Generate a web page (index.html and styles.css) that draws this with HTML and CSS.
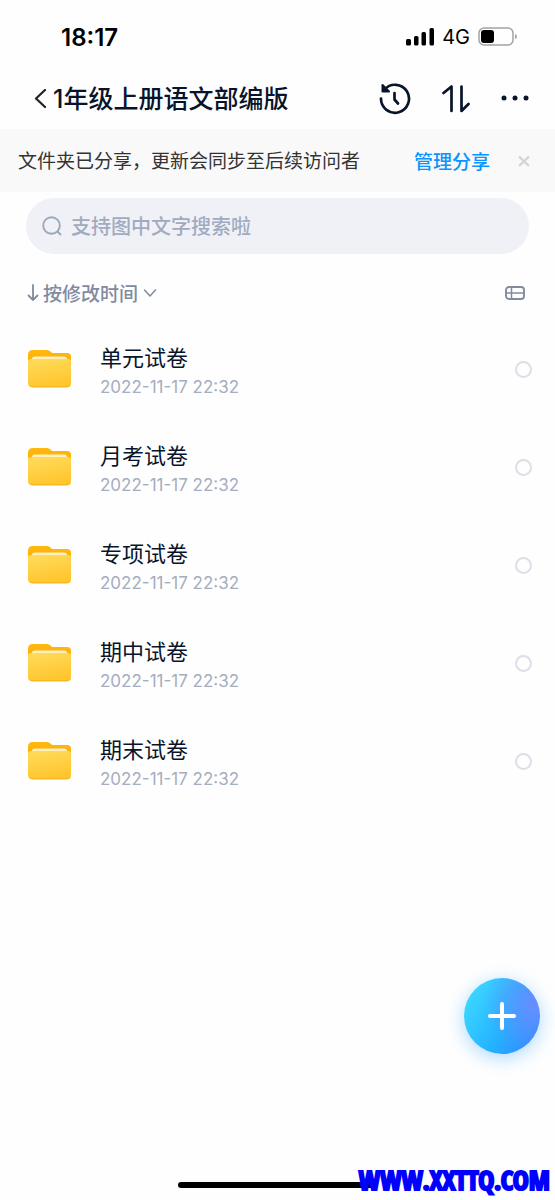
FILE: index.html
```html
<!DOCTYPE html>
<html lang="zh-CN">
<head>
<meta charset="utf-8">
<meta name="viewport" content="width=device-width, initial-scale=1">
<title>1年级上册语文部编版</title>
<link rel="stylesheet" href="styles.css">
</head>
<body>
<svg class="defs" width="0" height="0" aria-hidden="true">
  <defs>
    <linearGradient id="folder-back" x1="0" y1="0" x2="0" y2="1"><stop offset="0" stop-color="#ffb80f"/><stop offset="1" stop-color="#ffa800"/></linearGradient>
    <linearGradient id="folder-front" x1="0" y1="0" x2="0.3" y2="1"><stop offset="0" stop-color="#ffdc5c"/><stop offset="1" stop-color="#ffc630"/></linearGradient>
    <symbol id="folder" viewBox="0 0 44 38">
      <path d="M0 5Q0 0 5 0H19Q21 0 22.500 1.500L24 3H39Q43 3 43 7V20H0Z" fill="url(#folder-back)"/>
      <path d="M4 12V9Q4 6.500 7 6.500H36Q39 6.500 39 9V12Z" fill="#fff0c0"/>
      <path d="M0 12Q0 9 3 9H40Q43 9 43 12V33Q43 37 39 37H4Q0 37 0 33Z" fill="url(#folder-front)"/>
      <path d="M1 35Q2 37.500 5 37.500H38Q42 37.500 43 34Q41.500 36 38 36H5Q2 36 1 35Z" fill="#f6b91f"/>
    </symbol>
  </defs>
</svg>
<div class="screen">
  <div class="status">
    <time class="clock">18:17</time>
    <div class="indicators">
      <svg width="28" height="18" viewBox="0 0 28 18" aria-label="信号"><rect x="0" y="11" width="5" height="6.500" rx="1.500"/><rect x="8" y="8" width="4.500" height="9.500" rx="1.500"/><rect x="15.500" y="4" width="4.500" height="13.500" rx="1.500"/><rect x="23.500" y="0" width="4.500" height="17.500" rx="1.500"/></svg>
      <span class="network">4G</span>
      <svg width="40" height="20" viewBox="0 0 40 20" aria-label="电池"><rect x="1" y="1" width="34" height="17" rx="5" fill="none" stroke="#a3a3a3" stroke-width="1.500"/><rect x="3" y="3" width="13" height="13" rx="3"/><path d="M37 7Q39 7.500 39 9.500T37 12Z" fill="#a3a3a3"/></svg>
    </div>
  </div>

  <header class="header">
    <button class="icon-button" aria-label="返回"><svg width="13" height="20" viewBox="0 0 13 20" fill="none" stroke="#222" stroke-width="2.200" stroke-linecap="round" stroke-linejoin="round"><path d="M11 1L2 9.500l9 8.500"/></svg></button>
    <h1 class="title">1年级上册语文部编版</h1>
    <div class="actions">
      <button class="icon-button" aria-label="历史记录"><svg width="32" height="32" viewBox="0 0 32 32" fill="none" stroke="#07142a" stroke-width="2.700" stroke-linecap="round" stroke-linejoin="round"><path d="M2 15.500A14 14 0 1 0 5.500 6.500"/><path d="M3.500 2V8.500H10Z" fill="#07142a" stroke-width="2"/><path d="M15.500 10V16.500L19 20.500"/></svg></button>
      <button class="icon-button" aria-label="传输列表"><svg width="28" height="30" viewBox="0 0 28 30" fill="none" stroke="#07142a" stroke-width="2.700" stroke-linecap="round" stroke-linejoin="round"><path d="M1.500 9L9.500 2.500V27M19.500 2.500V27L26.500 20"/></svg></button>
      <button class="icon-button" aria-label="更多"><svg width="28" height="8" viewBox="0 0 28 8" fill="#07142a"><circle cx="3" cy="3" r="2.500"/><circle cx="14" cy="3" r="2.500"/><circle cx="25" cy="3" r="2.500"/></svg></button>
    </div>
  </header>

  <section class="notice">
    <p class="notice-text">文件夹已分享，更新会同步至后续访问者</p>
    <a class="notice-link" href="#share">管理分享</a>
    <button class="icon-button" aria-label="关闭"><svg width="12" height="12" viewBox="0 0 12 12" fill="none" stroke="#d4d4d4" stroke-width="2.400"><path d="M1 1.500l10 9.500M11 1.500L1 11"/></svg></button>
  </section>

  <main class="content">
    <label class="search">
      <svg width="20" height="20" viewBox="0 0 20 20" fill="none" stroke="#9ca7bc" stroke-width="1.900" stroke-linecap="round"><circle cx="9.500" cy="9.500" r="8.300"/><path d="M15.500 15.500L18.500 18.500"/></svg>
      <input class="search-input" type="text" aria-label="搜索" placeholder="支持图中文字搜索啦">
    </label>

    <div class="toolbar">
      <button class="sort">
        <svg width="12" height="18" viewBox="0 0 12 18" fill="none" stroke="#818a9e" stroke-width="1.800" stroke-linecap="round" stroke-linejoin="round"><path d="M6 1V16M1.500 11.500L6 16l4.500-4.500"/></svg>
        <span class="sort-label">按修改时间</span>
        <svg width="14" height="10" viewBox="0 0 14 10" fill="none" stroke="#818a9e" stroke-width="1.500" stroke-linecap="round" stroke-linejoin="round"><path d="M1.500 2L7 8l5.500-6"/></svg>
      </button>
      <button class="icon-button" aria-label="切换视图"><svg width="20" height="14" viewBox="0 0 20 14" fill="none" stroke="#818a9e" stroke-width="1.900"><rect x="1" y="1" width="18" height="12" rx="3"/><path d="M1 7H19M6.500 1V13" stroke-width="1.500"/></svg></button>
    </div>

    <ul class="files">
      <li class="file"><svg class="folder"><use href="#folder"/></svg><label class="file-info" for="f1"><span class="file-name">单元试卷</span><time class="file-date">2022-11-17 22:32</time></label><input class="pick" id="f1" type="checkbox"></li>
      <li class="file"><svg class="folder"><use href="#folder"/></svg><label class="file-info" for="f2"><span class="file-name">月考试卷</span><time class="file-date">2022-11-17 22:32</time></label><input class="pick" id="f2" type="checkbox"></li>
      <li class="file"><svg class="folder"><use href="#folder"/></svg><label class="file-info" for="f3"><span class="file-name">专项试卷</span><time class="file-date">2022-11-17 22:32</time></label><input class="pick" id="f3" type="checkbox"></li>
      <li class="file"><svg class="folder"><use href="#folder"/></svg><label class="file-info" for="f4"><span class="file-name">期中试卷</span><time class="file-date">2022-11-17 22:32</time></label><input class="pick" id="f4" type="checkbox"></li>
      <li class="file"><svg class="folder"><use href="#folder"/></svg><label class="file-info" for="f5"><span class="file-name">期末试卷</span><time class="file-date">2022-11-17 22:32</time></label><input class="pick" id="f5" type="checkbox"></li>
    </ul>
  </main>

  <div class="home-bar"></div>
  <button class="add" aria-label="新建"><svg width="28" height="28" viewBox="0 0 28 28" fill="none" stroke="#fff" stroke-width="4" stroke-linecap="round"><path d="M14 2V26M2 14H26"/></svg></button>
  <div class="site-mark">WWW.XXTTQ.COM</div>
</div>
</body>
</html>
```
FILE: styles.css
```css
* { box-sizing: border-box; }
body {
  margin: 0;
  background: #fefefe;
  color: #07142a;
  font-family: Inter, "Noto Sans CJK SC", sans-serif;
}
svg { display: block; flex: none; }
button, input { font: inherit; color: inherit; }
button { border: 0; padding: 0; background: none; }
.defs { position: absolute; }
.screen {
  position: relative;
  display: flex;
  flex-direction: column;
  min-height: 100vh;
}
.status {
  display: flex;
  align-items: center;
  justify-content: space-between;
  height: 68px;
  padding: 6px 37px 0 61px;
  color: #000;
}
.clock { font-size: 24px; font-weight: 600; }
.indicators { display: flex; align-items: center; gap: 8px; }
.network { font-size: 20px; }
.header {
  display: flex;
  align-items: center;
  gap: 6px;
  height: 61px;
  padding: 0 26px 0 34px;
}
.title {
  flex: 1;
  margin: 0;
  font-size: 25px;
  font-weight: 500;
  line-height: 36px;
  white-space: nowrap;
}
.actions { display: flex; align-items: center; gap: 31px; }
.notice {
  display: flex;
  align-items: center;
  height: 63px;
  padding: 0 25px 0 18px;
  background: #f9f9f9;
}
.notice-text {
  flex: 1;
  margin: 0;
  padding-top: 2px;
  color: #333;
  font-size: 19px;
  line-height: 28px;
  white-space: nowrap;
}
.notice-link {
  margin-right: 28px;
  color: #0a94ff;
  font-size: 19px;
  font-weight: 500;
  text-decoration: none;
}
.content { flex: 1; padding: 6px 26px 0; }
.search {
  display: flex;
  align-items: center;
  gap: 9px;
  height: 56px;
  padding: 0 16px;
  border-radius: 28px;
  background: #f0f1f7;
}
.search-input {
  flex: 1;
  min-width: 0;
  padding: 2px 0 0;
  border: 0;
  outline: 0;
  background: none;
  font-size: 20px;
  font-weight: 500;
}
.search-input::placeholder { color: #a0aac0; opacity: 1; }
.toolbar {
  display: flex;
  align-items: center;
  justify-content: space-between;
  height: 66px;
  padding: 12px 4px 0 1px;
}
.sort {
  display: flex;
  align-items: center;
  gap: 4px;
  color: #818a9e;
  font-size: 19px;
  font-weight: 500;
}
.sort-label { margin-right: 1px; padding-bottom: 2px; }
.files { margin: 0; padding: 0; list-style: none; }
.file {
  display: flex;
  align-items: center;
  height: 98px;
  padding-left: 2px;
}
.folder { width: 44px; height: 38px; margin-right: 28px; }
.file-info { display: flex; flex: 1; flex-direction: column; padding-top: 3px; }
.file-name { font-size: 22px; line-height: 32px; }
.file-date { color: #a5adc0; font-size: 17px; line-height: 26px; }
.pick {
  appearance: none;
  width: 17px;
  height: 17px;
  margin: 0 -3px 0 0;
  border: 2px solid #dcdfe8;
  border-radius: 50%;
}
.pick:checked { background: #0a94ff; }
.home-bar {
  width: 36%;
  height: 6px;
  margin: 0 auto 12px;
  border-radius: 3px;
  background: #000;
}
.add {
  position: absolute;
  right: 15px;
  bottom: 146px;
  display: grid;
  place-items: center;
  width: 76px;
  height: 76px;
  border-radius: 50%;
  background:
    radial-gradient(circle at 95% 35%, #6a8cff, transparent 60%),
    linear-gradient(120deg, #40dcff 5%, #24b4ff 55%, #2c8cff 90%);
  box-shadow: 0 4px 18px rgba(64, 170, 255, 0.45);
}
.site-mark {
  position: absolute;
  right: 5px;
  bottom: 2px;
  color: #00f;
  font-family: "Liberation Sans Narrow", "Open Sans Condensed", "Roboto Condensed", "Liberation Sans", sans-serif;
  font-size: 27px;
  font-weight: 700;
  line-height: 36px;
  -webkit-text-stroke: 2px #00f;
}
```
